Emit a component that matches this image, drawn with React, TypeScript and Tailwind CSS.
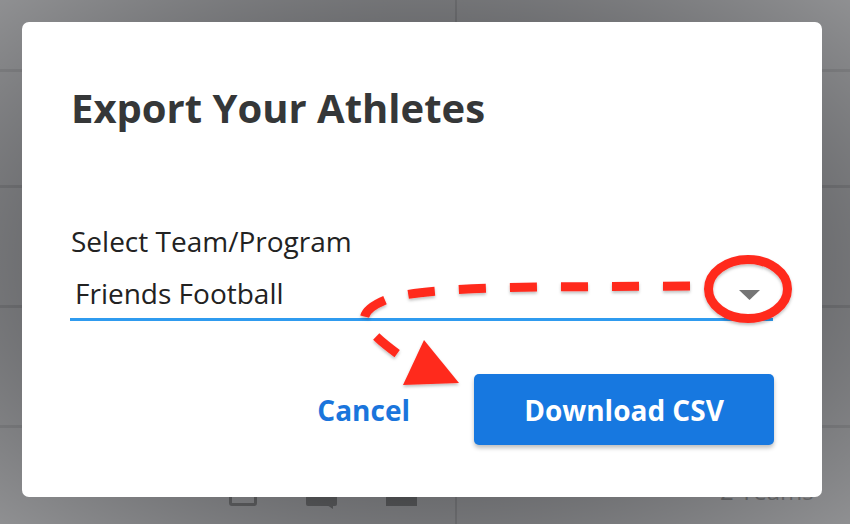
import React from "react";

const font = { fontFamily: '"Open Sans", "Noto Sans", Arial, sans-serif' };

function PageRow({ h, last, left, right }: { h: string; last?: boolean; left?: React.ReactNode; right?: React.ReactNode }) {
  return (
    <div className={`flex ${h} ${last ? "" : "border-b-[3px] border-[#4c4d50]"}`}>
      <div className="w-[457px] border-r-[2px] border-[#4c4d50] relative">{left}</div>
      <div className="flex-1 relative">{right}</div>
    </div>
  );
}

export default function App() {
  return (
    <div className="relative w-[850px] h-[524px] overflow-hidden bg-[#5a5b5e]" style={font}>
      {/* underlying page (dimmed) */}
      <div className="flex flex-col h-full">
        <PageRow h="h-[72px]" />
        <PageRow h="h-[116px]" />
        <PageRow h="h-[120px]" />
        <PageRow h="h-[120px]" />
        <PageRow
          h="flex-1"
          last
          left={
            <div className="flex items-end gap-[49px] pl-[229px] pt-[62px]">
              <div className="w-[28px] h-[16px] border-[3px] border-[#313234] rounded-[3px]" />
              <div className="relative w-[31px] h-[16px] bg-[#313234] rounded-[2px]">
                <div className="absolute right-[4px] -bottom-[3px] w-0 h-0 border-l-[6px] border-l-transparent border-t-[4px] border-t-[#313234]" />
              </div>
              <div className="w-[31px] h-[16px] bg-[#313234]" />
            </div>
          }
          right={
            <div className="pl-[263px] pt-[47px] text-[24px] leading-[32px] text-[#2c2d2f]">2 Teams</div>
          }
        />
      </div>
      {/* vignette */}
      <div className="absolute inset-0 pointer-events-none bg-[radial-gradient(ellipse_at_center,rgba(255,255,255,0)_45%,rgba(255,255,255,0.32)_100%)]" />

      {/* dialog */}
      <div className="absolute inset-0 pl-[22px] pt-[22px]">
        <div className="w-[800px] h-[475px] bg-white rounded-[7px] pl-[49px] pr-[48px] pt-[62px] flex flex-col">
          <h1 className="text-[40px] leading-[48px] font-bold text-[#353738]">Export Your Athletes</h1>
          <div className="mt-[92px] text-[28px] leading-[34px] text-[#222]">Select Team/Program</div>
          <div className="mt-[18px] flex items-center justify-between pl-[5px] pr-[13px] pb-[8px] border-b-[3px] border-[#2f9bef] w-[703px] -ml-[1px]">
            <span className="text-[28px] leading-[34px] text-[#222]">Friends Football</span>
            <svg width="21" height="10" viewBox="0 0 21 10" className="mt-[4px]">
              <polygon points="0,0 21,0 10.5,10" fill="#757575" />
            </svg>
          </div>
          <div className="mt-[53px] flex justify-end items-center">
            <button className="text-[28px] leading-[34px] font-bold text-[#1a75dc] px-[14px] mr-[50px]">Cancel</button>
            <button className="w-[300px] h-[71px] rounded-[5px] bg-[#1778e0] text-white text-[28px] leading-[34px] font-bold shadow-[0_3px_4px_rgba(0,0,0,0.25)]">
              Download CSV
            </button>
          </div>
        </div>
      </div>

      {/* annotation */}
      <svg className="absolute inset-0 pointer-events-none" width="850" height="524" viewBox="0 0 850 524">
        <defs>
          <filter id="sh" x="-10%" y="-10%" width="120%" height="130%">
            <feDropShadow dx="0" dy="2" stdDeviation="1.5" floodColor="#000" floodOpacity="0.25" />
          </filter>
        </defs>
        <g filter="url(#sh)">
          <path
            d="M 690 286 L 540 287 C 470 288 410 291 388 299 C 370 306 362 314 365 322 C 369 332 385 345 402 357"
            fill="none"
            stroke="#ff2a1f"
            strokeWidth="9"
            strokeDasharray="27 24"
          />
          <polygon points="424,340 403,385 459,383" fill="#ff2a1f" />
          <ellipse cx="748" cy="289" rx="39.5" ry="29.5" fill="none" stroke="#ff2a1f" strokeWidth="9" />
        </g>
      </svg>
    </div>
  );
}
